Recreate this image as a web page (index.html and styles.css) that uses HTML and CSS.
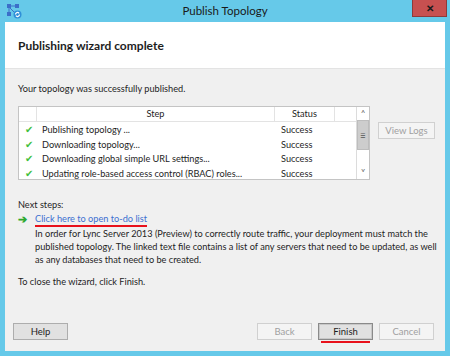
FILE: index.html
```html
<!DOCTYPE html>
<html lang="en">
<head>
  <meta charset="UTF-8">
  <title>Publish Topology</title>
  <link rel="stylesheet" href="styles.css">
</head>
<body>

<div class="window">

  <!-- Title bar -->
  <div class="titlebar">
    <svg class="app-icon" width="16" height="16" viewBox="0 0 16 16">
      <rect x="1" y="1" width="4" height="4" fill="#3b6fc9"/>
      <rect x="9" y="1" width="4" height="4" fill="#3b6fc9"/>
      <rect x="1" y="9" width="4" height="4" fill="#3b6fc9"/>
      <path d="M3 5v4M5 3h4M4 5l5 5" stroke="#3b6fc9" stroke-width="1" fill="none"/>
      <circle cx="11.5" cy="11.5" r="4" fill="#2f8fd8"/>
      <path d="M9.5 11.5a2 2 0 0 1 3.6-1.2M13.5 11.5a2 2 0 0 1-3.6 1.2" stroke="#fff" stroke-width="1.2" fill="none"/>
    </svg>
    <div class="title">Publish Topology</div>
    <div class="close">&#x2715;</div>
  </div>

  <div class="client">

    <div class="header">Publishing wizard complete</div>

    <div class="content">
      <p class="intro">Your topology was successfully published.</p>

      <div class="list-row">
        <div class="listbox">
          <div class="grid">
            <div class="cell head"></div>
            <div class="cell head center">Step</div>
            <div class="cell head center">Status</div>
            <div class="cell head last"></div>

            <div class="cell"><span class="check">&#x2714;</span></div>
            <div class="cell">Publishing topology ...</div>
            <div class="cell status">Success</div>
            <div class="cell last"></div>

            <div class="cell"><span class="check">&#x2714;</span></div>
            <div class="cell">Downloading topology...</div>
            <div class="cell status">Success</div>
            <div class="cell last"></div>

            <div class="cell"><span class="check">&#x2714;</span></div>
            <div class="cell">Downloading global simple URL settings...</div>
            <div class="cell status">Success</div>
            <div class="cell last"></div>

            <div class="cell"><span class="check">&#x2714;</span></div>
            <div class="cell">Updating role-based access control (RBAC) roles...</div>
            <div class="cell status">Success</div>
            <div class="cell last"></div>
          </div>
          <div class="scrollbar">
            <div class="arrow">&#x2C4;</div>
            <div class="thumb">&#x2261;</div>
            <div class="track"></div>
            <div class="arrow">&#x2C5;</div>
          </div>
        </div>
        <button class="btn disabled logs">View Logs</button>
      </div>

      <p class="next">Next steps:</p>
      <div class="step">
        <span class="go">&#x2794;</span>
        <div>
          <a class="todo">Click here to open to-do list</a>
          <p class="desc">In order for Lync Server 2013 (Preview) to correctly route traffic, your deployment must match the published topology. The linked text file contains a list of any servers that need to be updated, as well as any databases that need to be created.</p>
        </div>
      </div>

      <p class="closing">To close the wizard, click Finish.</p>
    </div>

    <div class="footer">
      <button class="btn">Help</button>
      <div class="spacer"></div>
      <button class="btn disabled">Back</button>
      <button class="btn default marked">Finish</button>
      <button class="btn disabled">Cancel</button>
    </div>

  </div>
</div>

</body>
</html>
```

FILE: styles.css
```css
body {
  margin: 0;
  font-family: Lato, "Open Sans", sans-serif;
  font-size: 9.2px;
  color: #1e1e1e;
}

.window {
  width: 450px;
  height: 356px;
  background: #66c9e9;
  display: flex;
  flex-direction: column;
}

/* Title bar */
.titlebar {
  height: 22px;
  display: grid;
  grid-template-columns: 1fr auto 1fr;
  align-items: start;
}

.app-icon {
  margin: 3px 0 0 6px;
}

.title {
  font-size: 11.5px;
  line-height: 22px;
  color: #1a1a1a;
}

.close {
  justify-self: end;
  width: 33px;
  height: 16px;
  margin-right: 3px;
  background: #c75050;
  border: 1px solid #8e3a3a;
  border-top: none;
  color: #1a1a1a;
  font-size: 10px;
  font-weight: bold;
  text-align: center;
  line-height: 16px;
}

/* Client area */
.client {
  flex: 1;
  margin: 0 5px 5px 5px;
  background: #f0f0f0;
  display: flex;
  flex-direction: column;
}

.header {
  height: 46px;
  background: #fff;
  border-bottom: 1px solid #e3e3e3;
  padding-left: 13px;
  font-weight: bold;
  font-size: 12px;
  line-height: 48px;
}

.content {
  flex: 1;
  padding: 13px 4px 0 13px;
}

p {
  margin: 0;
}

.intro {
  line-height: 13px;
}

.list-row {
  display: flex;
  align-items: flex-start;
  margin-top: 11px;
}

.listbox {
  width: 350px;
  height: 72px;
  border: 1px solid #c4c4c4;
  background: #fff;
  display: flex;
}

.grid {
  flex: 1;
  display: grid;
  grid-template-columns: 18px 238px 60px 1fr;
  grid-template-rows: 15px;
  grid-auto-rows: 14.6px;
  align-content: start;
}

.cell {
  white-space: nowrap;
  overflow: hidden;
  line-height: 15px;
  padding-left: 5px;
}

.cell.head {
  border-right: 1px solid #e3e3e3;
  border-bottom: 1px solid #e3e3e3;
  line-height: 14px;
}

.cell.head.last {
  border-right: none;
}

.center {
  text-align: center;
  padding-left: 0;
}

.status {
  padding-left: 6px;
}

.check {
  color: #3fbf3f;
  font-size: 10px;
  padding-left: 1px;
}

.scrollbar {
  width: 12px;
  border-left: 1px solid #dcdcdc;
  display: flex;
  flex-direction: column;
  background: #fff;
}

.arrow {
  height: 13px;
  font-size: 9px;
  line-height: 13px;
  text-align: center;
  color: #606060;
}

.thumb {
  height: 28px;
  background: #cdcdcd;
  border: 1px solid #bdbdbd;
  text-align: center;
  line-height: 28px;
  color: #555;
  font-size: 10px;
}

.track {
  flex: 1;
}

.btn {
  font-family: inherit;
  font-size: 9.5px;
  width: 55px;
  height: 17px;
  padding: 0;
  background: #e1e1e1;
  border: 1px solid #adadad;
  color: #1e1e1e;
  line-height: 14px;
}

.btn.disabled {
  background: #f4f4f4;
  border-color: #d0d0d0;
  color: #a0a0a0;
}

.btn.logs {
  width: 57px;
  margin: 16px 0 0 8px;
}

.btn.default {
  border: 1px solid #8a8a8a;
  box-shadow: inset 0 0 0 1px #c8c8c8;
}

.next {
  margin-top: 18px;
  line-height: 14px;
}

.step {
  display: flex;
}

.go {
  flex-shrink: 0;
  width: 17px;
  color: #2da82d;
  font-size: 11px;
  line-height: 14px;
  font-weight: bold;
}

.todo {
  color: #3c6fd0;
  display: inline-block;
  line-height: 13px;
  border-bottom: 2px solid #e8111b;
}

.desc {
  line-height: 13px;
  width: 402px;
}

.closing {
  margin-top: 9px;
  line-height: 14px;
}

/* Footer buttons */
.footer {
  display: flex;
  gap: 6px;
  padding: 0 11px 11px 8px;
}

.spacer {
  flex: 1;
}

.marked {
  position: relative;
}

.marked::after {
  content: "";
  position: absolute;
  left: 2px;
  right: 2px;
  bottom: -4px;
  height: 2px;
  background: #e8111b;
}
```
